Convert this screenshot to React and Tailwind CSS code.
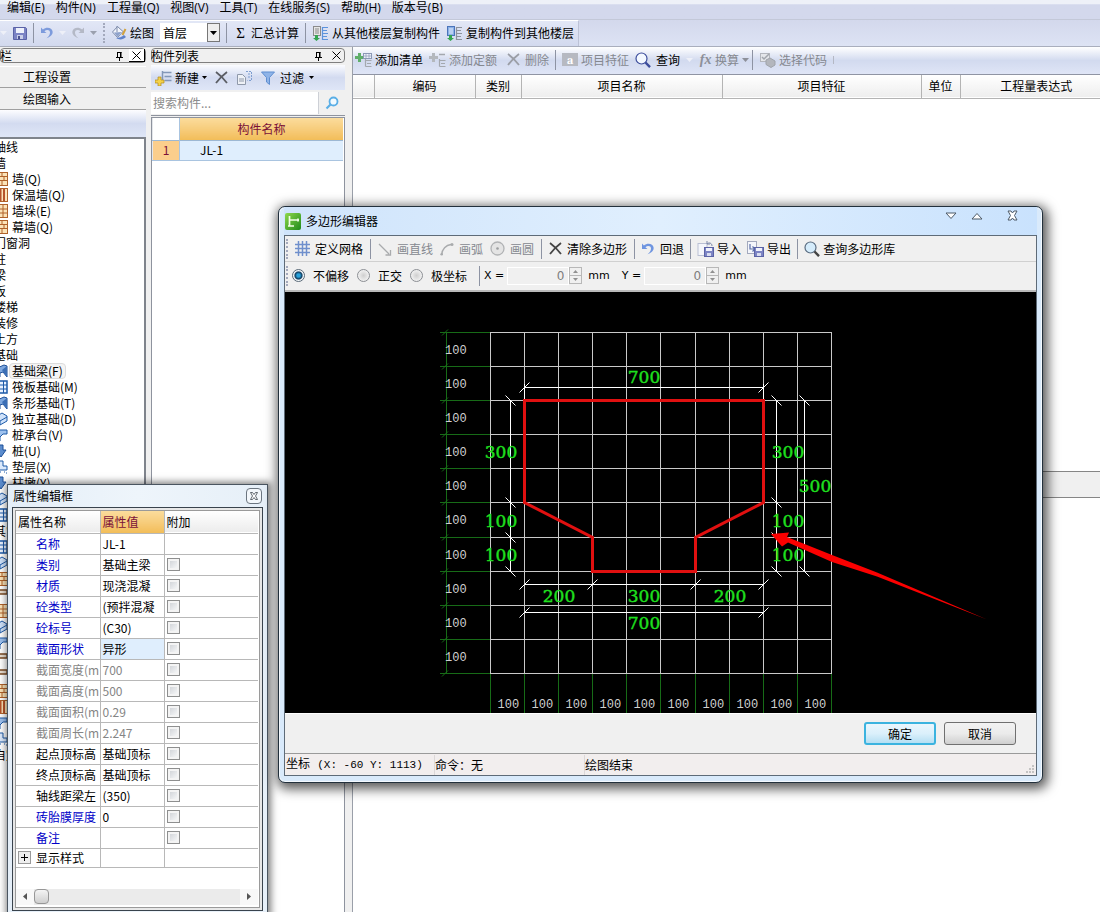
import React from "react";

/* ---------- small drawings ---------- */

const Svg = ({ w = 16, h = 16, children }) => (
  <svg width={w} height={h} viewBox={`0 0 ${w} ${h}`} fill="none" className="shrink-0" aria-hidden="true">
    {children}
  </svg>
);

const SaveIcon = () => (
  <Svg w={14} h={14}>
    <path d="M0.5 1.5h12l1 1v11h-13z" fill="#7b83c4" stroke="#5a62a6" />
    <rect x="3" y="2" width="8" height="5" fill="#eef1fb" />
    <rect x="4" y="9" width="6" height="4" fill="#c9cee8" />
    <rect x="5" y="10" width="2" height="3" fill="#4a528f" />
  </Svg>
);
const UndoIcon = ({ color = "#7d9bdc" }) => (
  <Svg w={14} h={14}>
    <path d="M1 1.5v5.5h5.5L4.4 5.2C6.5 3.3 10 3.6 10 6.5c0 2-1.2 4-3.5 5.8C10.5 11 13 8.6 12.6 5.6 12.200 1.600 6.400 0.400 2.900 3.600z" fill={color} />
  </Svg>
);
const RedoIcon = () => (
  <Svg w={14} h={14}>
    <path d="M13 1.500v5.500h-5.500l2-1.800C7.500 3.300 4 3.600 4 6.500c0 2 1.200 4 3.500 5.800C3.500 11 1 8.600 1.400 5.600 1.800 1.600 7.600 0.400 11.100 3.600z" fill="#b4b9c6" />
  </Svg>
);
const Caret = ({ color = "#000" }) => (
  <Svg w={7} h={4}>
    <path d="M0 0h7l-3.500 4z" fill={color} />
  </Svg>
);
const SmallCaret = () => (
  <Svg w={5} h={3}>
    <path d="M0 0h5l-2.500 3z" fill="#000" />
  </Svg>
);
const PaintIcon = () => (
  <Svg>
    <path d="M1.500 7l5-5.500 5.500 5-5.500 6z" fill="#f2f5fb" stroke="#7d8bab" />
    <path d="M6 1v6" stroke="#7d8bab" />
    <path d="M3 7.500l7.500-.5-4 5z" fill="#8ea2cb" />
    <path d="M14.500 4l-3 6" stroke="#d2a23a" strokeWidth="2" />
    <path d="M5 13c3 2 7 2 10-1l-2-2c-2 2-5 3-8 3z" fill="#5f82c9" />
  </Svg>
);
const CopyFromIcon = ({ flip }) => (
  <Svg w={17} h={16}>
    <rect x="1.500" y="1.500" width="7" height="9" fill={flip ? "#8bb0e6" : "#e6e6e6"} stroke={flip ? "#4b74ba" : "#8b8b8b"} />
    <path d="M3 4h4M3 6h4M3 8h4" stroke={flip ? "#e9f1ff" : "#8b8b8b"} />
    <path d="M3 10h3v3h2l-3.500 3-3.500-3h2z" fill="#35a552" />
    <path d="M11 2.500h5M10 5.500h5M11 8.500h5M10 11.500h5M11 14.500h5M10.500 2v13" stroke={flip ? "#8d939c" : "#5c93dc"} strokeWidth="1.200" />
  </Svg>
);
const NewIcon = () => (
  <Svg w={17} h={16}>
    <path d="M7.500 1v10M7.500 2.500h9M9.500 6.500h7M9.500 10.500h7" stroke="#8397b8" strokeWidth="1.500" />
    <path d="M3 7h3v3h3v3h-3v3h-3v-3h-3v-3h3z" fill="#f4d24a" stroke="#b08a1e" strokeWidth=".7" />
  </Svg>
);
const CrossIcon = ({ color = "#5a5d63" }) => (
  <Svg w={13} h={13}>
    <path d="M1 1c4 3 8 7 11 11M12 1C8 4 4 8 1 12" stroke={color} strokeWidth="1.800" />
  </Svg>
);
const CopyIcon = () => (
  <Svg w={17} h={15}>
    <path d="M1.500 4.500h5l3 3v7h-8z" fill="#eef1f6" stroke="#8f99aa" />
    <path d="M3 9h5M3 11h5" stroke="#8f99aa" />
    <path d="M10 1.500h5.500v9h-4M12 4h2M12 7h2" stroke="#7f9fd0" strokeDasharray="2 1" />
  </Svg>
);
const FunnelIcon = () => (
  <Svg w={14} h={14}>
    <path d="M.5 1h13L8.500 6.500v7L5.500 11V6.500z" fill="#8fb4e8" stroke="#5f8ed0" />
  </Svg>
);
const GlassIcon = ({ color = "#3c4d9c", fill = "#f3f8ff", handle }) => (
  <Svg>
    <circle cx="6.500" cy="6.500" r="5.500" stroke={color} strokeWidth="1.200" fill={fill} />
    <path d="M10.500 10.500l4.500 4.700" stroke={handle || color} strokeWidth="2.400" />
  </Svg>
);
const FindIcon = () => (
  <Svg w={14} h={14}>
    <circle cx="8.500" cy="5.500" r="4" stroke="#5aaee6" strokeWidth="1.800" fill="#f2faff" />
    <path d="M5.500 8.500L1.500 12.500" stroke="#5aaee6" strokeWidth="2.200" />
  </Svg>
);
const AddListIcon = ({ active }) => (
  <Svg w={17} h={16}>
    <path d="M3 1h3v3h3v3h-3v3h-3v-3h-3v-3h3z" fill={active ? "#5fae6a" : "#b4b8bd"} />
    {active ? (
      <>
        <rect x="8.500" y="1.500" width="8" height="5" fill="#eef2fa" stroke="#8a98b5" />
        <path d="M8 4h8M11 1.500v5M14 1.500v5" stroke="#8a98b5" strokeWidth=".7" />
      </>
    ) : (
      <path d="M10 2.500h6" stroke="#a4a8ae" strokeWidth="1.500" />
    )}
    <path d="M10.500 7v7.500M10.500 8.500h6M12 11.500h4M10.500 14.500h6" stroke="#a4a8ae" strokeWidth="1.200" />
  </Svg>
);
const SelectCodeIcon = () => (
  <Svg w={17} h={16}>
    <rect x="1.500" y="1.500" width="9" height="8" fill="#e4e6ea" stroke="#b3b6bd" />
    <path d="M3 5l2 2 5-5" stroke="#a2a6ad" strokeWidth="1.500" />
    <path d="M7 8l4-2 5 3v4l-4 2.500-5-3z" fill="#b3b6bd" stroke="#9fa3aa" />
  </Svg>
);
const GridIcon = () => (
  <Svg w={15} h={15}>
    <path d="M0 3.500h15M0 7.500h15M0 11.500h15M3.500 0v15M7.500 0v15M11.500 0v15" stroke="#6f8fcc" strokeWidth="1.500" />
  </Svg>
);
const LineIcon = () => (
  <Svg w={14} h={14}>
    <path d="M1 2l10 10M12.500 8v5h-5" stroke="#a9abad" strokeWidth="1.300" />
  </Svg>
);
const ArcIcon = () => (
  <Svg w={14} h={14}>
    <path d="M1.500 13C2 7 6 3 11 2.500" stroke="#a9abad" strokeWidth="1.400" />
    <circle cx="12" cy="2.500" r="1.500" fill="#a9abad" />
    <circle cx="1.700" cy="12.300" r="1.300" fill="#a9abad" />
  </Svg>
);
const CircleIcon = () => (
  <Svg w={15} h={15}>
    <circle cx="7.500" cy="7.500" r="6.500" stroke="#b1b3b5" strokeWidth="1.300" fill="#e4e4e4" />
    <circle cx="7.500" cy="7.500" r="1.300" fill="#9c9ea0" />
  </Svg>
);
const TransferIcon = ({ out }) => (
  <Svg w={17} h={16}>
    {out ? (
      <>
        <rect x=".5" y=".5" width="9" height="12" fill="#f4f6fb" stroke="#a3a9bd" />
        <path d="M3 3v5h4M5.500 5.500L8 8l-2.500 2.500" stroke="#5a6ea8" strokeWidth="1.200" />
      </>
    ) : (
      <>
        <rect x="1" y="2.500" width="9" height="12" fill="#f4f6fb" stroke="#b9bfd3" />
        <path d="M10 3c2-2 5-1 5 2M10 0v3h3" stroke="#7a86a8" />
      </>
    )}
    <rect x="7.500" y="6.500" width="9" height="9" fill="#7c84c4" stroke="#5b63a6" />
    <rect x="9" y="7" width="6" height="3" fill="#f0f2fb" />
    <rect x="10" y="12" width="4" height="3" fill="#d8dcf0" />
  </Svg>
);
const PinIcon = () => (
  <Svg w={9} h={10}>
    <path d="M2.500 1.500h4M2.500 1v5M6 1v5M5.500 1v5M1 6.500h7M4.500 6.500V10" stroke="#000" />
  </Svg>
);
const CloseX = () => (
  <Svg w={9} h={9}>
    <path d="M.5.5l8 8M8.500.5l-8 8" stroke="#000" />
  </Svg>
);
const LogoIcon = () => (
  <Svg w={16} h={17}>
    <defs>
      <linearGradient id="logo" x1="0" y1="0" x2="1" y2="1">
        <stop offset="0" stopColor="#8fd84c" />
        <stop offset="1" stopColor="#1f8a1a" />
      </linearGradient>
    </defs>
    <rect width="16" height="17" rx="2" fill="url(#logo)" />
    <path d="M4.500 3v10.500M3 13h6M5 7h9M13 5.500v3" stroke="#f2ffe8" strokeWidth="1.700" />
  </Svg>
);

const BrickIcon = ({ kind }) => (
  <Svg w={15} h={14}>
    <rect x=".5" y=".5" width="14" height="13" fill="#fbe3b8" stroke="#b0622a" />
    {kind === "v" ? (
      <path d="M4 1v12M7.500 1v12M11 1v12" stroke="#b5532a" strokeWidth="2" />
    ) : kind === "p" ? (
      <path d="M1 5h13M1 9h13M5 1v12M10 1v12" stroke="#b0622a" />
    ) : (
      <path d="M1 4.500h13M1 8.500h13M9 1v3.500M5 4.500v4M11 4.500v4M9 8.500v5" stroke="#b0622a" />
    )}
  </Svg>
);
const BlueIcon = ({ kind }) => (
  <Svg w={15} h={14}>
    {kind === "beam" && (
      <>
        <path d="M2 5l9-4 3 1v11l-4-5-3 1v4H2z" fill="#7fa8de" stroke="#1d4f98" />
        <path d="M9 6l5-4v11z" fill="#3c6fb5" />
      </>
    )}
    {kind === "grid" && (
      <>
        <rect x="1" y="1" width="13" height="12" fill="#e9f2ff" stroke="#1d5aa8" strokeWidth="1.500" />
        <path d="M1 5h13M1 9h13M6 1v12M10.500 1v12" stroke="#1d5aa8" />
      </>
    )}
    {kind === "box" && <path d="M1 6l8-5 5 3v5l-7 4-6-3zM1 6l6 3v4M7 9l7-4" fill="#cfe2fa" stroke="#1d5aa8" />}
    {kind === "cap" && <path d="M1 2h13v4h-4l-3 3v4H3V6H1z" fill="#9dc1ee" stroke="#1d5aa8" />}
    {kind === "pile" && <path d="M6 1h4v5h3l-5 7-5-7h3z" fill="#5b8ccd" stroke="#1d4f98" />}
    {kind === "base" && <path d="M6 1h4v5h4v4H2V6h4zM3 12h1M7 12h1M11 12h1M13 13h1" fill="#dbe9fb" stroke="#1d5aa8" />}
  </Svg>
);
const BrownIcon = () => (
  <Svg w={15} h={14}>
    <path d="M2 2h12v4H6v7H2z" fill="#e8ddd0" stroke="#7a4a22" strokeWidth="1.300" />
  </Svg>
);

/* ---------- shared pieces ---------- */

const Sep = () => <span className="h-5 w-px shrink-0 bg-[#8d93a3]" />;
const Grip = () => <span className="h-5 w-0 shrink-0 border-l-2 border-dotted border-[#a3a9bc]" />;

const Tool = ({ icon, children, muted, wide }) => (
  <button
    type="button"
    className={
      "flex shrink-0 items-center whitespace-nowrap " +
      (wide ? "gap-[5px] " : "gap-[3px] ") +
      (muted ? "text-[#85888f]" : "text-black")
    }
  >
    {icon}
    {children}
  </button>
);

const menus = ["编辑(E)", "构件(N)", "工程量(Q)", "视图(V)", "工具(T)", "在线服务(S)", "帮助(H)", "版本号(B)"];

const tree = [
  ["轴线"],
  ["墙"],
  ["墙(Q)", <BrickIcon />],
  ["保温墙(Q)", <BrickIcon kind="v" />],
  ["墙垛(E)", <BrickIcon kind="p" />],
  ["幕墙(Q)", <BrickIcon />],
  ["门窗洞"],
  ["柱"],
  ["梁"],
  ["板"],
  ["楼梯"],
  ["装修"],
  ["土方"],
  ["基础"],
  ["基础梁(F)", <BlueIcon kind="beam" />, true],
  ["筏板基础(M)", <BlueIcon kind="grid" />],
  ["条形基础(T)", <BlueIcon kind="beam" />],
  ["独立基础(D)", <BlueIcon kind="box" />],
  ["桩承台(V)", <BlueIcon kind="cap" />],
  ["桩(U)", <BlueIcon kind="pile" />],
  ["垫层(X)", <BlueIcon kind="base" />],
  ["柱墩(Y)", <BlueIcon kind="pile" />],
  ["", <BlueIcon kind="box" />],
  ["", <BlueIcon kind="grid" />],
  ["其它"],
  ["", <BlueIcon kind="grid" />],
  ["", <BlueIcon kind="box" />],
  ["", <BrickIcon />],
  ["", <BrownIcon />],
  ["", <BrickIcon kind="p" />],
  ["", <BlueIcon kind="box" />],
  ["", <BlueIcon kind="cap" />],
  ["", <BrownIcon />],
  ["", <BrownIcon />],
  ["", <BrickIcon />],
  ["", <BrickIcon kind="v" />],
  ["", <BlueIcon kind="cap" />],
  ["", <BlueIcon kind="base" />],
  ["自定义"],
];

const PaneHeader = ({ title, raised }) => (
  <div className="flex h-[15px] items-center rounded-sm border border-[#7f7f7f] bg-[#f0f0f0]">
    <span className="-ml-px flex-1 leading-[13px]">{title}</span>
    <button type="button" aria-label="固定" className="mr-[5px]">
      <PinIcon />
    </button>
    <button
      type="button"
      aria-label="关闭"
      className={"flex h-[13px] w-4 items-center justify-center " + (raised ? "border-r border-b border-black bg-white" : "")}
    >
      <CloseX />
    </button>
  </div>
);

function LeftPane() {
  return (
    <aside className="flex w-[146px] shrink-0 flex-col overflow-hidden pt-px">
      <PaneHeader title="栏" raised />
      <button type="button" className="mt-[3px] h-[22px] border-b border-[#a0a0a0] border-t border-t-white pr-[52px] text-center">
        工程设置
      </button>
      <button type="button" className="h-[22px] border-b border-[#a0a0a0] pr-[52px] text-center">
        绘图输入
      </button>
      <div className="h-[27px] bg-gradient-to-b from-[#fdfdff] via-[#d3dbf0] to-[#dfe6f7]" />
      <ul className="flex-1 overflow-hidden border-t-2 border-r-2 border-[#7f848c] bg-white">
        {tree.map(([label, icon, picked], i) => (
          <li key={i} className={"flex h-4 items-center leading-4 whitespace-nowrap " + (icon ? "-ml-[7px]" : "-ml-[6px]")}>
            {icon}
            <span
              className={
                icon
                  ? picked
                    ? "ml-px rounded-sm border border-[#dcdcdc] bg-[#f4f4f4] px-[2px] leading-[14px]"
                    : "ml-1"
                  : ""
              }
            >
              {label}
            </span>
          </li>
        ))}
      </ul>
    </aside>
  );
}

function ListPane() {
  return (
    <section className="flex w-[194px] shrink-0 flex-col pt-px">
      <PaneHeader title="构件列表" />
      <div className="mt-[2px] flex h-[25px] items-center gap-2 bg-gradient-to-b from-[#fbfcff] via-[#d3dbf0] to-[#dfe6f7] pl-1">
        <Tool icon={<NewIcon />}>
          新建
          <SmallCaret />
        </Tool>
        <button type="button" aria-label="删除">
          <CrossIcon />
        </button>
        <button type="button" aria-label="复制">
          <CopyIcon />
        </button>
        <Tool icon={<FunnelIcon />} wide>
          <span>过滤</span>
          <SmallCaret />
        </Tool>
      </div>
      <div className="flex h-[26px] items-center border-b border-[#8e939e] bg-[#f0f0f0]">
        <input
          type="text"
          aria-label="搜索构件"
          placeholder="搜索构件..."
          className="h-[22px] w-[168px] border-r border-[#cdd0d6] bg-white pl-[2px] outline-none placeholder:text-[#8c8c8c]"
        />
        <button type="button" aria-label="搜索" className="flex flex-1 justify-center">
          <FindIcon />
        </button>
      </div>
      <div className="mt-px flex-1 border-x border-t border-[#8e939e] bg-white pr-px">
        <table className="w-full border-collapse border-b border-[#a9c4e0] border-l border-l-[#e3e6ea]">
          <thead>
            <tr className="h-[22px] border-b border-[#9db8d3]">
              <th className="w-[27px] border-r border-[#a9c4e0]" />
              <th className="bg-gradient-to-b from-[#fbdc9c] to-[#f2bd58] font-normal text-[#7a1038]">构件名称</th>
            </tr>
          </thead>
          <tbody>
            <tr className="h-5">
              <td className="border-r border-[#a9c4e0] bg-[#fbce8c] text-center text-[#7a1038]">1</td>
              <td className="bg-[#dfeefd] pl-5">JL-1</td>
            </tr>
          </tbody>
        </table>
      </div>
    </section>
  );
}

function ItemsPane() {
  return (
    <section className="flex min-w-0 flex-1 flex-col border-l border-[#9a9fa9]">
      <div className="flex h-[28px] items-center gap-[6px] border-b border-[#8f94a3] bg-gradient-to-b from-white via-[#d2daef] to-[#dfe5f6] pb-[2px] pl-[2px]">
        <Tool icon={<AddListIcon active />}>添加清单</Tool>
        <Tool icon={<AddListIcon />} muted>
          添加定额
        </Tool>
        <div className="pl-1">
          <Tool icon={<CrossIcon color="#9b9ea6" />} muted wide>
            删除
          </Tool>
        </div>
        <Sep />
        <Tool
          icon={<span className="flex h-[13px] w-4 items-center justify-center bg-[#b6b9c1] font-serif text-[12px] leading-3 font-bold text-white">a</span>}
          muted
        >
          项目特征
        </Tool>
        <Tool icon={<GlassIcon />} wide>查询</Tool>
        <Caret color="#eef0f8" />
        <div className="flex items-center gap-[3px]">
          <Tool
            icon={<span className="w-[13px] font-['Liberation_Serif',serif] text-[14px] leading-4 font-bold text-[#8d9099] italic">fx</span>}
            muted
          >
            换算
          </Tool>
          <Caret color="#8d9099" />
          <Sep />
        </div>
        <Tool icon={<SelectCodeIcon />} muted>
          选择代码
        </Tool>
        <span className="h-2 w-px bg-[#b4b8c4]" />
      </div>
      <div className="flex-1 bg-white">
        <table className="w-full table-fixed border-collapse">
          <thead>
            <tr className="h-[23px] border-b border-[#b4b4b4] bg-gradient-to-b from-white to-[#eeeeee]">
              {[
                ["", "w-[21px]"],
                ["编码", "w-[101px]"],
                ["类别", "w-[46px]"],
                ["项目名称", "w-[201px]"],
                ["项目特征", "w-[199px]"],
                ["单位", "w-[39px]"],
                ["工程量表达式", ""],
              ].map(([t, w], i) => (
                <th key={i} className={"border-r border-[#b4b4b4] font-normal whitespace-nowrap last:border-r-0 last:pl-3 " + w}>
                  {t}
                </th>
              ))}
            </tr>
          </thead>
        </table>
      </div>
      <div className="h-[27px] border-y border-[#868686] bg-[#f0f0f0]" />
      <div className="h-[414px] bg-white" />
    </section>
  );
}

/* ---------- section drawing ---------- */

const Ticks = ({ points, flip }) =>
  points.map(([x, y], i) => (
    <path key={i} d={flip ? `M${x - 5} ${y - 5}l10 10` : `M${x - 5} ${y + 5}l10 -10`} stroke="#fff" />
  ));

function SectionCanvas() {
  const xs = [205.5, 239.5, 273.5, 307.5, 341.5, 375.5, 410.5, 444.5, 478.5, 512.5, 546.5];
  const ys = [40.5, 74.5, 108.5, 142.5, 176.5, 210.5, 245.5, 279.5, 313.5, 347.5, 381.5];
  const big = [
    [359, 91, "700"],
    [216, 166, "300"],
    [216, 235, "100"],
    [216, 269, "100"],
    [503, 166, "300"],
    [530, 200, "500"],
    [503, 235, "100"],
    [503, 269, "100"],
    [274, 310, "200"],
    [359, 310, "300"],
    [445, 310, "200"],
    [359, 337, "700"],
  ];
  return (
    <svg width="751" height="421" viewBox="0 0 751 421" className="block bg-black" role="img" aria-label="截面图形">
      <g stroke="#c9c9c9">
        {xs.map((x) => (
          <path key={x} d={`M${x} 40V382`} />
        ))}
        {ys.map((y) => (
          <path key={y} d={`M205 ${y}H547`} />
        ))}
      </g>
      <g stroke="#176b17">
        {xs.map((x) => (
          <path key={x} d={`M${x} 382V421`} />
        ))}
        {ys.map((y) => (
          <path key={y} d={`M155 ${y}H205M157 ${y + 3}l6 -6`} />
        ))}
        <path d="M161.500 40V382" />
      </g>
      <g fill="#d0d0d0" className="font-['Liberation_Mono',monospace] text-[12px]">
        {ys.slice(0, 10).map((y) => (
          <text key={y} x="160" y={y + 21}>
            100
          </text>
        ))}
        {xs.slice(0, 10).map((x) => (
          <text key={x} x={x + 7} y="416">
            100
          </text>
        ))}
      </g>
      <g stroke="#fff">
        <path d="M239 95.500H479M239.500 92v16M478.500 92v16" />
        <path d="M225.500 108V280M491.500 108V280M519.500 108V280" />
        <path d="M239 292.500H479M239 320.500H479" />
      </g>
      <Ticks points={[[239.5, 95.5], [478.5, 95.5], [239.5, 292.5], [307.5, 292.5], [410.5, 292.5], [478.5, 292.5], [239.5, 320.5], [478.5, 320.5]]} />
      <Ticks
        flip
        points={[[225.5, 108.5], [225.5, 210.5], [225.5, 245.5], [225.5, 279.5], [491.5, 108.5], [491.5, 210.5], [491.5, 245.5], [491.5, 279.5], [519.5, 108.5], [519.5, 279.5]]}
      />
      <path d="M239.500 108.500H478.500V210.500L410.500 245.500V279.500H307.500V245.500L239.500 210.500Z" stroke="#e01010" strokeWidth="3" fill="none" />
      <g fill="#1fe01f" stroke="#1fe01f" strokeWidth=".4" textAnchor="middle" className="font-['DejaVu_Serif',serif] text-[17px]">
        {big.map(([x, y, t], i) => (
          <text key={i} x={x} y={y}>
            {t}
          </text>
        ))}
      </g>
      <path d="M486 242L504 240.500L502 245L547 263L592 280.500L702 327.500L592 284.500L547 270L503 250.500L497 254.500Z" fill="#fb0000" />
    </svg>
  );
}

const Spin = ({ label }) => (
  <span className="flex items-center">
    <label className="flex items-center gap-[3px] font-['DejaVu_Sans',sans-serif] text-[11px]">
      {label} =
      <input
        type="text"
        defaultValue="0"
        disabled
        className="h-[18px] w-[62px] border border-white bg-[#f0f0f0] pr-1 text-right text-[12px] text-[#7d7d7d]"
      />
    </label>
    <span className="flex h-[17px] w-[13px] flex-col border border-[#b8b8b8]">
      <button type="button" aria-label="增加" className="flex flex-1 items-center justify-center border-b border-[#b8b8b8]">
        <svg width="5" height="3" viewBox="0 0 5 3" aria-hidden="true">
          <path d="M0 3h5l-2.500-3z" fill="#909090" />
        </svg>
      </button>
      <button type="button" aria-label="减少" className="flex flex-1 items-center justify-center">
        <svg width="5" height="3" viewBox="0 0 5 3" aria-hidden="true">
          <path d="M0 0h5l-2.500 3z" fill="#909090" />
        </svg>
      </button>
    </span>
    <span className="ml-[6px] font-['DejaVu_Sans',sans-serif] text-[11px]">mm</span>
  </span>
);

const Mode = ({ children, checked }) => (
  <label className="flex items-center gap-2">
    <input
      type="radio"
      name="mode"
      defaultChecked={checked}
      className="size-[13px] appearance-none rounded-full border border-[#8c8f94] bg-radial from-[#cfcfcf] to-white checked:border-[#5a6a78] checked:from-[#2aa3dc] checked:from-20% checked:via-[#0d3c5e] checked:via-45% checked:to-[#f4f8fa] checked:to-60%"
    />
    {children}
  </label>
);

function PolygonDialog() {
  return (
    <div
      role="dialog"
      aria-label="多边形编辑器"
      className="absolute top-[206px] left-[278px] w-[765px] rounded-[7px] border border-[#22303c] bg-[#d9eafb] px-[5px] pb-[6px] shadow-[2px_3px_12px_3px_rgba(0,0,0,0.65)] ring-1 ring-white/70 ring-inset"
    >
      <div className="flex h-[28px] items-center gap-[5px] bg-gradient-to-r from-[#cfe4fb] via-[#e0effe] to-[#c9e2fd] px-px">
        <LogoIcon />
        <span className="flex-1">多边形编辑器</span>
        <div className="flex items-center gap-[14px] self-start pt-[3px] pr-[18px]">
          <button type="button" aria-label="最小化">
            <svg width="12" height="8" viewBox="0 0 12 8" aria-hidden="true">
              <path d="M1 1h10L6 6.500z" fill="#fff" stroke="#4d5a68" />
            </svg>
          </button>
          <button type="button" aria-label="最大化" className="pr-[10px]">
            <svg width="12" height="8" viewBox="0 0 12 8" aria-hidden="true">
              <path d="M1 7h10L6 1.500z" fill="#fff" stroke="#4d5a68" />
            </svg>
          </button>
          <button type="button" aria-label="关闭">
            <svg width="11" height="11" viewBox="0 0 11 11" aria-hidden="true">
              <path d="M1 1h3l1.500 2L7 1h3L7.500 5.500 10 10H7L5.500 8 4 10H1l2.500-4.500z" fill="#fff" stroke="#4d5a68" />
            </svg>
          </button>
        </div>
      </div>
      <div className="border border-[#5e6b78] bg-[#f0f0f0]">
        <div className="flex h-[26px] items-center gap-[7px] border-b border-[#d0d0d0] pl-px">
          <Grip />
          <Tool icon={<GridIcon />} wide>定义网格</Tool>
          <Sep />
          <Tool icon={<LineIcon />} muted wide>画直线</Tool>
          <Tool icon={<ArcIcon />} muted wide>画弧</Tool>
          <Tool icon={<CircleIcon />} muted wide>画圆</Tool>
          <Sep />
          <Tool icon={<CrossIcon color="#444" />} wide>清除多边形</Tool>
          <div className="flex items-center gap-[6px]">
            <Sep />
            <Tool icon={<UndoIcon color="#6f95e0" />} wide>回退</Tool>
            <Sep />
            <Tool icon={<TransferIcon />}>导入</Tool>
            <Tool icon={<TransferIcon out />}>导出</Tool>
            <Sep />
            <Tool icon={<GlassIcon color="#5a6c80" fill="#d5ecfb" handle="#444" />}>查询多边形库</Tool>
          </div>
        </div>
        <div className="flex h-[30px] items-center border-b-2 border-[#b9b9b9] pb-px pl-px">
          <div className="flex items-center gap-1">
            <Grip />
            <div className="flex items-center gap-2">
              <Mode checked>不偏移</Mode>
              <Mode>正交</Mode>
              <Mode>极坐标</Mode>
            </div>
          </div>
          <span className="mr-1 ml-3 flex">
            <Sep />
          </span>
          <div className="flex gap-3">
            <Spin label="X" />
            <Spin label="Y" />
          </div>
        </div>
        <SectionCanvas />
        <div className="flex h-[40px] items-center justify-end gap-2 border-t border-white pr-5">
          <button
            type="button"
            className="h-[23px] w-[72px] rounded-[3px] border-2 border-[#3bb3df] bg-gradient-to-b from-[#eaf6fd] via-[#dbf0fb] to-[#b5dff3]"
          >
            确定
          </button>
          <button
            type="button"
            className="h-[23px] w-[72px] rounded-[3px] border border-[#707070] bg-gradient-to-b from-[#f2f2f2] via-[#ebebeb] to-[#cfcfcf]"
          >
            取消
          </button>
        </div>
        <div className="flex h-[22px] items-center border-t border-[#9a9a9a] bg-[#f2eeee]">
          <span className="w-[150px] border-r border-[#dcd8d8] pl-px font-['Liberation_Mono','Noto_Sans_CJK_SC',monospace] leading-5 whitespace-nowrap">
            坐标 <span className="text-[11px]">(X: -60 Y: 1113)</span>
          </span>
          <span className="w-[150px] border-r border-[#dcd8d8] leading-5">命令：无</span>
          <span className="flex-1 leading-5">绘图结束</span>
          <svg width="10" height="10" viewBox="0 0 10 10" className="mr-px self-end" aria-hidden="true">
            <path d="M7 1h2M7 4h2M4 4h2M7 7h2M4 7h2M1 7h2" stroke="#b5b5b5" strokeWidth="1.500" />
          </svg>
        </div>
      </div>
    </div>
  );
}

/* ---------- property panel ---------- */

const props = [
  ["名称", "JL-1", "blue"],
  ["类别", "基础主梁", "blue"],
  ["材质", "现浇混凝", "blue"],
  ["砼类型", "(预拌混凝", "blue"],
  ["砼标号", "(C30)", "blue"],
  ["截面形状", "异形", "blue"],
  ["截面宽度(m", "700", "gray"],
  ["截面高度(m", "500", "gray"],
  ["截面面积(m", "0.29", "gray"],
  ["截面周长(m", "2.247", "gray"],
  ["起点顶标高", "基础顶标", "black"],
  ["终点顶标高", "基础顶标", "black"],
  ["轴线距梁左", "(350)", "black"],
  ["砖胎膜厚度", "0", "blue"],
  ["备注", "", "blue"],
];

function PropertyPanel() {
  return (
    <div
      role="dialog"
      aria-label="属性编辑框"
      className="absolute top-[484px] left-[7px] w-[261px] border border-[#4a5560] bg-gradient-to-r from-[#e4eef8] via-[#eef5fb] to-[#e6eff8] px-1 pb-1 shadow-[1px_0_7px_2px_rgba(0,0,0,0.5)]"
    >
      <div className="flex h-[22px] items-center justify-between px-px">
        <span>属性编辑框</span>
        <button type="button" aria-label="关闭" className="flex h-[16px] w-[16px] items-center justify-center rounded-sm border border-[#6b7580] bg-[#f3f7fb]">
          <svg width="8" height="8" viewBox="0 0 8 8" aria-hidden="true">
            <path d="M.5.5h2L4 2.500 5.500.5h2L5.500 4l2 3.500h-2L4 5.500 2.500 7.500h-2L2.500 4z" fill="#fff" stroke="#3c444d" strokeWidth=".8" />
          </svg>
        </button>
      </div>
      <div className="border border-[#39434d] bg-[#e8e8e8] p-[2px]">
        <div className="border border-[#9a9a9a] bg-white pr-px">
          <table className="w-full table-fixed border-collapse">
            <thead>
              <tr className="h-[22px] border-b border-[#b8b8b8] bg-gradient-to-b from-white to-[#ececec] text-left">
                <th className="w-[84px] border-r border-[#b8b8b8] pl-[2px] font-normal">属性名称</th>
                <th className="w-[64px] border-r border-[#b8b8b8] bg-gradient-to-b from-[#fbdc9c] to-[#f2bd58] pl-[2px] font-normal text-[#7a1038]">属性值</th>
                <th className="pl-[2px] font-normal">附加</th>
              </tr>
            </thead>
            <tbody>
              {props.map(([name, value, tone], i) => (
                <tr key={name} className="h-[21px] border-b border-[#b8b8b8] leading-5">
                  <td
                    className={
                      "overflow-hidden border-r border-[#b8b8b8] pl-[20px] whitespace-nowrap " +
                      (tone === "blue" ? "text-[#0000c8]" : tone === "gray" ? "text-[#858585]" : "text-black")
                    }
                  >
                    {name}
                  </td>
                  <td
                    className={
                      "overflow-hidden border-r border-[#b8b8b8] pl-[2px] whitespace-nowrap " +
                      (tone === "gray" ? "text-[#858585] " : "text-black ") +
                      (value === "异形" ? "bg-[#dfeefd]" : "")
                    }
                  >
                    {value}
                  </td>
                  <td className="pl-[2px]">
                    {i > 0 && (
                      <input
                        type="checkbox"
                        aria-label={name + " 附加"}
                        className="block size-[13px] appearance-none border border-[#8e8f8f] bg-gradient-to-br from-[#c9cdd2] to-white shadow-[inset_0_0_0_2px_#f4f4f4]"
                      />
                    )}
                  </td>
                </tr>
              ))}
              <tr className="h-[19px] border-b border-[#b8b8b8] leading-[18px]">
                <td className="border-r border-[#b8b8b8] pl-[2px]">
                  <button type="button" className="flex items-center gap-[5px]">
                    <svg width="13" height="13" viewBox="0 0 13 13" aria-hidden="true">
                      <rect x=".5" y=".5" width="12" height="12" fill="#eee" stroke="#9a9a9a" />
                      <path d="M3 6.500h7M6.500 3v7" stroke="#000" />
                    </svg>
                    显示样式
                  </button>
                </td>
                <td className="border-r border-[#b8b8b8]" />
                <td />
              </tr>
            </tbody>
          </table>
          <div className="mt-[21px] flex h-[16px] items-center bg-[#ebebeb]">
            <button type="button" aria-label="向左" className="flex h-4 w-[18px] items-center justify-center bg-[#f8f8f8]">
              <svg width="4" height="7" viewBox="0 0 4 7" aria-hidden="true">
                <path d="M4 0v7L0 3.500z" fill="#555" />
              </svg>
            </button>
            <span className="h-[15px] w-[15px] rounded-sm border border-[#979797] bg-gradient-to-b from-[#f4f4f4] to-[#cfcfcf]" />
            <span className="flex-1" />
            <button type="button" aria-label="向右" className="flex h-4 w-[18px] items-center justify-center bg-[#f8f8f8]">
              <svg width="4" height="7" viewBox="0 0 4 7" aria-hidden="true">
                <path d="M0 0v7l4-3.500z" fill="#555" />
              </svg>
            </button>
          </div>
          <div className="h-[2px]" />
        </div>
      </div>
    </div>
  );
}

/* ---------- page ---------- */

export default function App() {
  return (
    <div className="relative flex h-screen w-full flex-col overflow-hidden bg-[#f0f0f0] font-['Noto_Sans_CJK_SC',sans-serif] text-[12px] leading-4 text-black">
      <nav className="flex h-5 shrink-0 items-start gap-[11px] border-b border-[#c3c8d8] bg-gradient-to-b from-[#eef1f8] from-20% to-[#d3d8ec] to-25% pl-[7px] font-['Open_Sans','Noto_Sans_CJK_SC',sans-serif]">
        {menus.map((m) => (
          <button key={m} type="button" className="whitespace-nowrap">
            {m}
          </button>
        ))}
      </nav>
      <div className="flex h-[27px] shrink-0 border-b border-[#a9aebd] bg-gradient-to-b from-[#d3d8ec] to-[#dde3f4]">
        <div className="flex items-center border-t border-r border-t-white border-r-[#bcc2d6] bg-gradient-to-b from-[#e2e7f6] to-[#d2d9ee] pr-1 pb-[2px]">
          <div className="flex items-center gap-[6px]">
            <Caret color="#eef0f8" />
            <SaveIcon />
            <Sep />
            <div className="flex items-center gap-[5px]">
              <button type="button" aria-label="撤销">
                <UndoIcon />
              </button>
              <Caret color="#eef0f8" />
              <button type="button" aria-label="重做">
                <RedoIcon />
              </button>
              <Caret color="#9aa0ae" />
            </div>
            <Grip />
            <Tool icon={<PaintIcon />}>绘图</Tool>
            <span className="relative flex h-[19px] w-[60px] items-center bg-white">
              <select aria-label="楼层" className="h-full w-full appearance-none bg-transparent pl-[3px] outline-none">
                <option>首层</option>
              </select>
              <span className="pointer-events-none absolute top-0 right-0 flex h-[19px] w-[13px] items-center justify-center border border-[#777] bg-[#eee]">
                <Caret />
              </span>
            </span>
            <Sep />
            <Tool icon={<span className="w-[15px] text-center font-['Liberation_Serif',serif] text-[15px]">Σ</span>}>汇总计算</Tool>
            <Sep />
            <Tool icon={<CopyFromIcon />}>从其他楼层复制构件</Tool>
            <Tool icon={<CopyFromIcon flip />}>复制构件到其他楼层</Tool>
          </div>
        </div>
      </div>
      <main className="flex min-h-0 flex-1">
        <LeftPane />
        <div className="w-[5px] shrink-0" />
        <ListPane />
        <div className="w-[7px] shrink-0" />
        <ItemsPane />
      </main>
      <PropertyPanel />
      <PolygonDialog />
    </div>
  );
}
